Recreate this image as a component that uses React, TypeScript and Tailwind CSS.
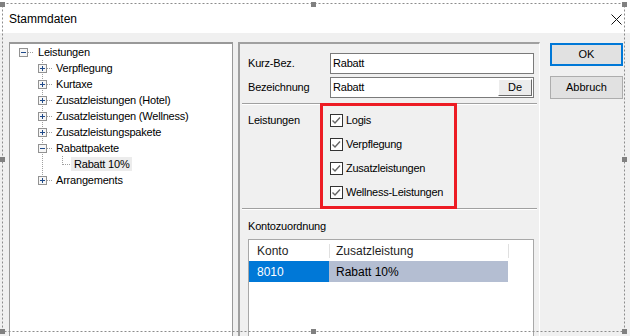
import React from 'react';

type Node = { label: string; level: number; open?: boolean; last?: boolean; selected?: boolean };

const treeData: Node[] = [
  { label: 'Leistungen', level: 0, open: true },
  { label: 'Verpflegung', level: 1 },
  { label: 'Kurtaxe', level: 1 },
  { label: 'Zusatzleistungen (Hotel)', level: 1 },
  { label: 'Zusatzleistungen (Wellness)', level: 1 },
  { label: 'Zusatzleistungspakete', level: 1 },
  { label: 'Rabattpakete', level: 1, open: true },
  { label: 'Rabatt 10%', level: 2, selected: true },
  { label: 'Arrangements', level: 1, last: true },
];

const Expander = ({ x, open }: { x: number; open?: boolean }) => (
  <g>
    <rect x={x + 0.5} y={4.5} width={8} height={8} fill="#f6f6f6" stroke="#929292" />
    <line x1={x + 2} y1={8.5} x2={x + 7} y2={8.5} stroke="#1f4a8a" />
    {!open && <line x1={x + 4.5} y1={6} x2={x + 4.5} y2={11} stroke="#1f4a8a" />}
  </g>
);

const Dots = (props: { x1: number; y1: number; x2: number; y2: number }) => (
  <line {...props} stroke="#a0a0a0" strokeDasharray="1 1" />
);

const TreeRow = ({ node }: { node: Node }) => {
  let width = 26;
  let art: React.ReactNode = null;
  if (node.level === 0) {
    art = (
      <>
        <Dots x1={18} y1={8.5} x2={24} y2={8.5} />
        <Expander x={9} open={node.open} />
      </>
    );
  } else if (node.level === 1) {
    width = 44;
    art = (
      <>
        <Dots x1={32.5} y1={0} x2={32.5} y2={node.last ? 9 : 16} />
        <Dots x1={37} y1={8.5} x2={43} y2={8.5} />
        <Expander x={28} open={node.open} />
      </>
    );
  } else {
    width = 61;
    art = (
      <>
        <Dots x1={32.5} y1={0} x2={32.5} y2={16} />
        <Dots x1={52.5} y1={0} x2={52.5} y2={9} />
        <Dots x1={53} y1={8.5} x2={61} y2={8.5} />
      </>
    );
  }
  return (
    <div className="flex h-[16px] items-center">
      <svg width={width} height={16} className="shrink-0">
        {art}
      </svg>
      <span
        className={
          node.selected
            ? 'flex h-[14px] items-center bg-[#ececec] pl-[3px] pr-[3px] text-[11px] leading-none tracking-[-0.2px]'
            : 'pl-[2px] text-[11px] leading-none tracking-[-0.2px]'
        }
      >
        {node.label}
      </span>
    </div>
  );
};

const CheckBox = ({ label }: { label: string }) => (
  <div className="flex h-[24px] items-center gap-[3px]">
    <svg width={13} height={13} className="shrink-0">
      <rect x={0.5} y={0.5} width={12} height={12} fill="#fff" stroke="#333" />
      <path d="M2.5 6.5 L5 9 L10 3.5" fill="none" stroke="#666" strokeWidth={1.4} />
    </svg>
    <span className="text-[11px] leading-none tracking-[-0.25px]">{label}</span>
  </div>
);

const Separator = () => <div className="mx-[2px] border-t border-b border-t-[#a0a0a0] border-b-white" />;

const FieldRow = ({ label, value, lang }: { label: string; value: string; lang?: boolean }) => (
  <div className="flex items-center">
    <span className="w-[82px] text-[11px] leading-none tracking-[-0.2px]">{label}</span>
    <div className="flex h-[21px] flex-1 items-center justify-between border border-[#7a7a7a] bg-white pl-[2px] pr-[1px]">
      <span className="text-[11px] leading-none tracking-[-0.2px]">{value}</span>
      {lang && (
        <div className="flex h-[17px] w-[34px] items-center justify-center border border-t-white border-l-white border-r-[#696969] border-b-[#696969] bg-[#ececec] text-[11px] leading-none">
          De
        </div>
      )}
    </div>
  </div>
);

export default function App() {
  return (
    <div className="relative h-[336px] w-[630px] overflow-hidden bg-[#f0f0f0] font-['Liberation_Sans',Arial,sans-serif] text-black">
      {/* Title bar */}
      <div className="flex h-[33px] items-center justify-between bg-white pl-[9px] pr-[8px] pt-[5px]">
        <span className="text-[12px] leading-none">Stammdaten</span>
        <svg width={11} height={11}>
          <path d="M0.5 0.5 L10.5 10.5 M10.5 0.5 L0.5 10.5" stroke="#111" strokeWidth={1} />
        </svg>
      </div>

      <div className="flex items-start pl-[9px] pt-[9px]">
        {/* Tree */}
        <div className="h-[300px] w-[224px] border-x border-t-2 border-[#999] bg-white">
          {treeData.map((n) => (
            <TreeRow key={n.label} node={n} />
          ))}
        </div>

        {/* Details */}
        <div className="ml-[5px] flex h-[300px] w-[302px] flex-col border-t-2 border-l-2 border-r border-t-[#a0a0a0] border-l-[#a0a0a0] border-r-white">
          <div className="flex flex-col gap-[3px] pt-[9px] pb-[5px] pl-[8px] pr-[5px]">
            <FieldRow label="Kurz-Bez." value="Rabatt" />
            <FieldRow label="Bezeichnung" value="Rabatt" lang />
          </div>
          <Separator />
          <div className="flex pt-[3px] pb-[4px] pl-[8px]">
            <div className="flex h-[24px] w-[82px] items-center text-[11px] leading-none tracking-[-0.2px]">
              Leistungen
            </div>
            <div className="flex flex-col">
              <CheckBox label="Logis" />
              <CheckBox label="Verpflegung" />
              <CheckBox label="Zusatzleistungen" />
              <CheckBox label="Wellness-Leistungen" />
            </div>
          </div>
          <Separator />
          <div className="flex flex-col pt-[9px] pl-[8px] pr-[5px]">
            <div className="flex h-[14px] items-center text-[11px] leading-none tracking-[-0.2px]">Kontozuordnung</div>
            <div className="mt-[6px] h-[110px] border border-[#a8a8a8] bg-white text-[12px] leading-none">
              <div className="flex h-[21px] items-center text-[#1e1e1e]">
                <div className="w-[80px] pl-[8px]">Konto</div>
                <div className="h-[14px] w-px bg-[#e0e0e0]" />
                <div className="w-[178px] pl-[6px]">Zusatzleistung</div>
                <div className="h-[14px] w-px bg-[#e0e0e0]" />
              </div>
              <div className="flex h-[21px]">
                <div className="flex w-[80px] items-center bg-[#0078d7] pl-[8px] text-white">8010</div>
                <div className="flex w-[179px] items-center bg-[#b4bed2] pl-[7px]">Rabatt 10%</div>
              </div>
            </div>
          </div>
        </div>

        {/* Buttons */}
        <div className="ml-[10px] mt-[1px] flex w-[73px] flex-col gap-[10px]">
          <div className="flex h-[23px] items-center justify-center border-2 border-[#0078d7] bg-[#e1e1e1] text-[11px] leading-none">
            OK
          </div>
          <div className="flex h-[23px] items-center justify-center border border-[#adadad] bg-[#e1e1e1] text-[11px] leading-none">
            Abbruch
          </div>
        </div>
      </div>

      {/* Annotation box */}
      <div className="pointer-events-none absolute left-[320px] top-[103px] h-[106px] w-[137px] border-[3px] border-[#ed1c24]" />

      {/* Designer selection frame */}
      <svg className="pointer-events-none absolute left-0 top-0" width={630} height={336}>
        <rect x={2.5} y={3.5} width={622} height={328} fill="none" stroke="#8c8c8c" strokeDasharray="2 2" />
        {[
          [0, 2],
          [311, 2],
          [622, 2],
          [0, 157],
          [622, 157],
          [0, 329],
          [311, 329],
          [622, 329],
        ].map(([x, y]) => (
          <rect key={`${x}-${y}`} x={x} y={y} width={5} height={5} fill="#808080" />
        ))}
      </svg>
    </div>
  );
}
